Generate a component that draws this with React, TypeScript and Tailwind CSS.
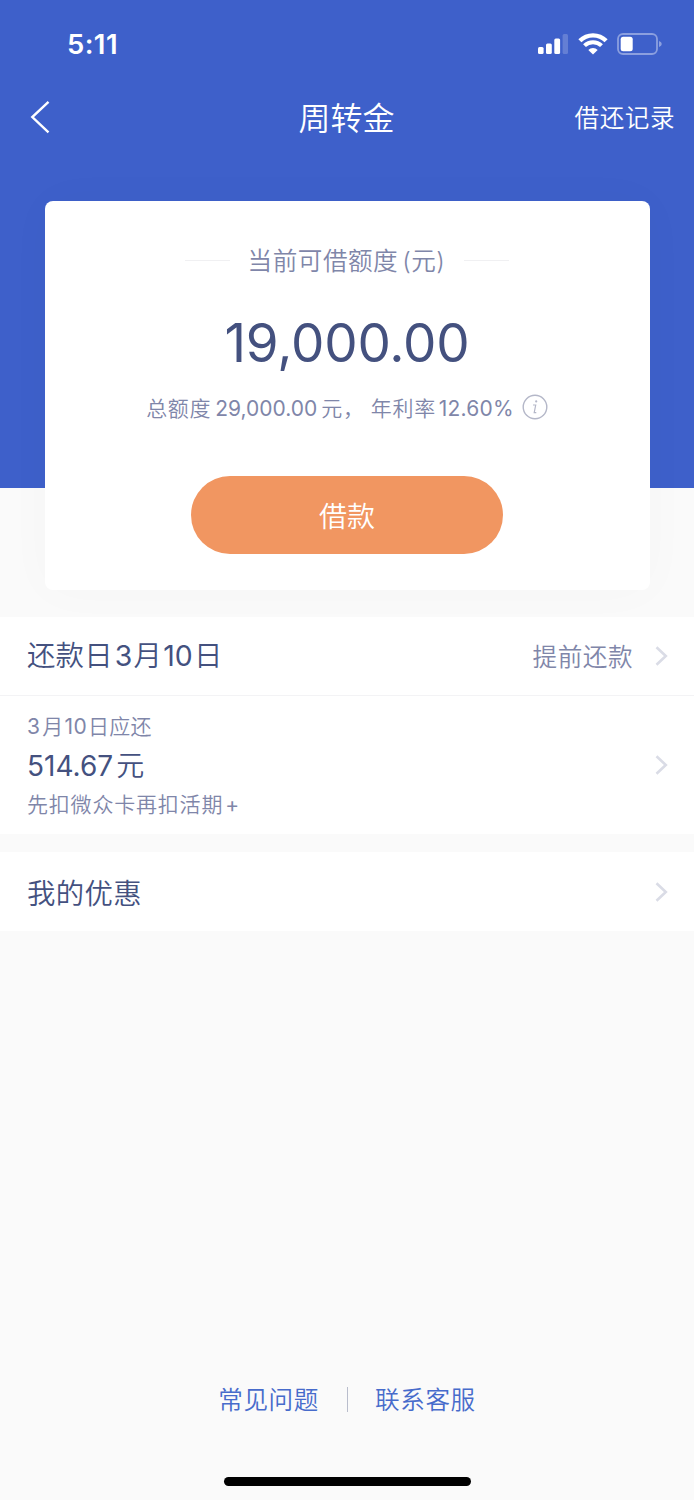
import type { ReactNode } from 'react';

function StatusBar() {
  return (
    <div className="flex h-[88px] items-center justify-between pl-[67px] pr-[31px] text-white">
      <span className="pt-px text-[27.5px] font-semibold leading-none tracking-[0.4px]">5:11</span>
      <div className="flex items-center">
        <svg width="30" height="20" viewBox="0 0 30 20" fill="currentColor">
          <rect x="0" y="13" width="5.6" height="7" rx="1.5" />
          <rect x="8" y="9.5" width="5.8" height="10.5" rx="1.5" />
          <rect x="16.3" y="4.5" width="5.8" height="15.5" rx="1.5" />
          <rect x="24.6" y="0" width="5.4" height="20" rx="1.5" opacity="0.2" />
        </svg>
        <svg className="ml-[10px]" width="30" height="22" viewBox="0 0 30 22" fill="none" stroke="currentColor">
          <path d="M1.9 7.8 A18.6 18.6 0 0 1 28.1 7.8" strokeWidth="4.4" />
          <path d="M6.5 12.7 A12 12 0 0 1 23.5 12.7" strokeWidth="4" />
          <path d="M15 21.6 L10.3 17 A6.8 6.8 0 0 1 19.7 17 Z" fill="currentColor" stroke="none" />
        </svg>
        <svg className="ml-[9px]" width="46" height="22" viewBox="0 0 46 22" fill="none">
          <rect x="1" y="1" width="39" height="20" rx="5" stroke="currentColor" strokeWidth="1.8" opacity="0.4" />
          <rect x="3.7" y="3.8" width="12" height="14.4" rx="2.5" fill="currentColor" />
          <path d="M42 8 Q44.8 9 44.8 11 Q44.8 13 42 14 Z" fill="currentColor" opacity="0.4" />
        </svg>
      </div>
    </div>
  );
}

function NavBar() {
  return (
    <div className="grid h-[58px] grid-cols-3 items-center pl-[30px] pr-[19px] text-white">
      <svg width="20" height="34" viewBox="0 0 20 34" fill="none" stroke="currentColor" strokeWidth="2.4">
        <path d="M18.5 1.8 L2.3 17 L18.5 32.4" />
      </svg>
      <h1 className="-ml-[12px] pt-[3px] text-center text-[32px] leading-none">周转金</h1>
      <span className="pt-[3px] text-right text-[24.6px] leading-none tracking-[0.5px]">借还记录</span>
    </div>
  );
}

function Chevron() {
  return (
    <svg width="13" height="20" viewBox="0 0 13 20" fill="none" stroke="#dadce6" strokeWidth="2.6">
      <path d="M1.5 1.3 L10.8 10 L1.5 18.7" />
    </svg>
  );
}

function Row({ className, children }: { className: string; children: ReactNode }) {
  return (
    <div className={`flex items-center justify-between bg-white pl-[27px] pr-[26px] ${className}`}>
      {children}
    </div>
  );
}

function CreditCard() {
  return (
    <section className="relative ml-[44.5px] -mt-[287px] flex h-[389px] w-[605px] flex-col items-center rounded-[8px] bg-white shadow-[0_0_50px_rgba(0,0,0,0.025)]">
      <div className="mt-[41px] flex h-[36px] items-center text-[24.6px] text-[#7f86a9]">
        <span className="h-px w-[45px] bg-[#f0f0f2]" />
        <span className="ml-[18px] mr-[19px] pt-[3px] tracking-[0.5px]">
          当前可借额度<span className="ml-[4px]">(</span>元)
        </span>
        <span className="h-px w-[45px] bg-[#f0f0f2]" />
      </div>

      <div className="mt-[37px] text-[53px] font-normal leading-[56px] tracking-[-0.2px] text-[#44517f]">19,000.00</div>

      <div className="mt-[21px] flex h-[30px] items-center whitespace-nowrap text-[21px] text-[#7f86a9]">
        <span className="pt-[3px] tracking-[0.7px]">总额度</span>
        <span className="ml-[4px] pt-[3px] font-normal">29,000.00</span>
        <span className="ml-[4px] pt-[3px] tracking-[0.7px]">元，</span>
        <span className="ml-[6px] pt-[3px] tracking-[0.7px]">年利率</span>
        <span className="ml-[3px] pt-[3px] font-normal tracking-[0.2px]">12.60%</span>
        <svg className="ml-[8px]" width="26" height="26" viewBox="0 0 26 26" fill="none" stroke="#b4b7c8">
          <circle cx="13" cy="13" r="11.8" strokeWidth="1.4" />
          <path d="M11 11 H13.7 L12.2 18.6 H14.3" strokeWidth="1.2" />
          <circle cx="14.2" cy="7.4" r="1.1" fill="#b4b7c8" stroke="none" />
        </svg>
      </div>

      <button type="button" className="mt-[54px] h-[78px] w-[312px] rounded-full bg-[#f19661] pt-[3px] text-[28px] text-white">
        借款
      </button>
    </section>
  );
}

export default function App() {
  return (
    <div className="flex h-[1500px] w-[694px] flex-col overflow-hidden bg-[#fafafa] font-['Inter','Noto_Sans_CJK_SC',sans-serif] font-[350]">
      <header className="h-[488px] shrink-0 bg-[#3e60ca]">
        <StatusBar />
        <NavBar />
      </header>

      <CreditCard />

      <main className="relative mt-[27px]">
        <Row className="h-[78px]">
          <div className="pt-px text-[28.4px] tracking-[0.2px] text-[#44517f]">
            还款日<span className="ml-[2px] mr-px font-normal">3</span>月
            <span className="mx-px font-normal">10</span>日
          </div>
          <div className="flex items-center">
            <span className="mr-[22px] pt-[2px] text-[24.6px] tracking-[0.5px] text-[#7f86a9]">提前还款</span>
            <Chevron />
          </div>
        </Row>

        <Row className="h-[139px] border-t border-[#f3f3f5]">
          <div className="pt-[2px] text-[#7f86a9]">
            <div className="text-[21px] leading-[32px] tracking-[0.3px]">
              <span className="mr-[2px] font-normal">3</span>月
              <span className="mx-px font-normal">10</span>日应还
            </div>
            <div className="text-[28px] leading-[46px] text-[#44517f]">
              <span className="mr-[3px] font-normal">514.67</span>元
            </div>
            <div className="text-[21px] leading-[32px] tracking-[0.8px]">
              先扣微众卡再扣活期<span className="ml-[2px] font-normal">+</span>
            </div>
          </div>
          <Chevron />
        </Row>

        <Row className="mt-[18px] h-[79px]">
          <span className="pt-[6px] text-[28.4px] tracking-[0.4px] text-[#44517f]">我的优惠</span>
          <Chevron />
        </Row>
      </main>

      <footer className="mt-auto flex flex-col items-center pb-[14px]">
        <div className="flex items-center text-[24.6px] text-[#476bcb]">
          <a className="pt-[2px] tracking-[0.6px]">常见问题</a>
          <span className="ml-[28px] mr-[27px] h-[25px] w-px bg-[#b9bdcc]" />
          <a className="pt-[2px] tracking-[0.6px]">联系客服</a>
        </div>
        <div className="mt-[58px] h-[9px] w-[247px] rounded-full bg-black" />
      </footer>
    </div>
  );
}
